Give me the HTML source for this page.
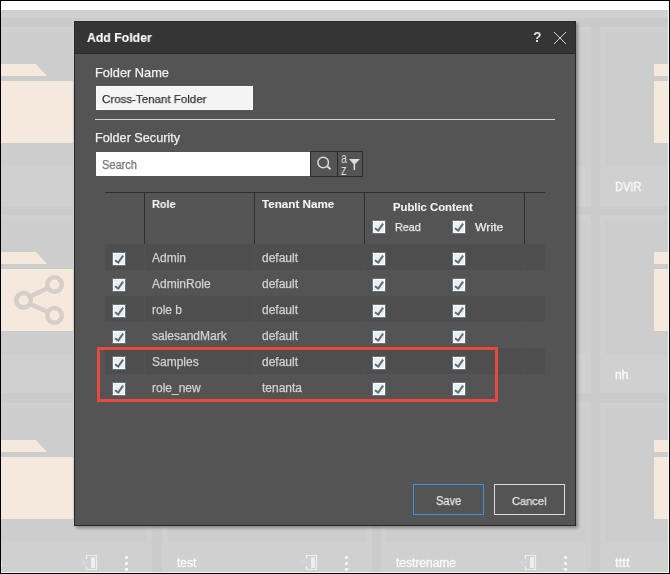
<!DOCTYPE html>
<html><head><meta charset="utf-8"><style>
html,body{margin:0;padding:0}
body{width:670px;height:574px;overflow:hidden;position:relative;background:#cbcbcb;font-family:"Liberation Sans",sans-serif}
.r{position:absolute;box-sizing:border-box}
.t{position:absolute;white-space:nowrap;will-change:transform;-webkit-text-stroke:0.25px currentColor}
</style></head><body>
<div class="r" style="left:0px;top:0px;width:670px;height:10px;background:#ffffff"></div>
<div class="r" style="left:0px;top:10px;width:670px;height:8px;background:#d0d0d0"></div>
<div class="r" style="left:0px;top:18px;width:670px;height:9px;background:#cacaca"></div>
<div class="r" style="left:-58px;top:27px;width:210px;height:179px;background:#d0d0d0"></div>
<div class="r" style="left:-53px;top:32px;width:200px;height:134px;background:#cdcdcd"></div>
<div class="r" style="left:162px;top:27px;width:210px;height:179px;background:#d0d0d0"></div>
<div class="r" style="left:167px;top:32px;width:200px;height:134px;background:#cdcdcd"></div>
<div class="r" style="left:381px;top:27px;width:210px;height:179px;background:#d0d0d0"></div>
<div class="r" style="left:386px;top:32px;width:200px;height:134px;background:#cdcdcd"></div>
<div class="r" style="left:600px;top:27px;width:210px;height:179px;background:#d0d0d0"></div>
<div class="r" style="left:605px;top:32px;width:200px;height:134px;background:#cdcdcd"></div>
<div class="r" style="left:-58px;top:215px;width:210px;height:178px;background:#d0d0d0"></div>
<div class="r" style="left:-53px;top:220px;width:200px;height:134px;background:#cdcdcd"></div>
<div class="r" style="left:162px;top:215px;width:210px;height:178px;background:#d0d0d0"></div>
<div class="r" style="left:167px;top:220px;width:200px;height:134px;background:#cdcdcd"></div>
<div class="r" style="left:381px;top:215px;width:210px;height:178px;background:#d0d0d0"></div>
<div class="r" style="left:386px;top:220px;width:200px;height:134px;background:#cdcdcd"></div>
<div class="r" style="left:600px;top:215px;width:210px;height:178px;background:#d0d0d0"></div>
<div class="r" style="left:605px;top:220px;width:200px;height:134px;background:#cdcdcd"></div>
<div class="r" style="left:-58px;top:403px;width:210px;height:200px;background:#d0d0d0"></div>
<div class="r" style="left:-53px;top:408px;width:200px;height:134px;background:#cdcdcd"></div>
<div class="r" style="left:162px;top:403px;width:210px;height:200px;background:#d0d0d0"></div>
<div class="r" style="left:167px;top:408px;width:200px;height:134px;background:#cdcdcd"></div>
<div class="r" style="left:381px;top:403px;width:210px;height:200px;background:#d0d0d0"></div>
<div class="r" style="left:386px;top:408px;width:200px;height:134px;background:#cdcdcd"></div>
<div class="r" style="left:600px;top:403px;width:210px;height:200px;background:#d0d0d0"></div>
<div class="r" style="left:605px;top:408px;width:200px;height:134px;background:#cdcdcd"></div>
<svg class="r" style="left:-4px;top:64px" width="60" height="12"><polygon points="0,0 40,0 51,12 0,12" fill="#f5e8dc"/></svg>
<div class="r" style="left:-4px;top:81px;width:102px;height:62px;background:#f5e8dc"></div>
<svg class="r" style="left:654px;top:64px" width="60" height="12"><polygon points="0,0 40,0 51,12 0,12" fill="#f5e8dc"/></svg>
<div class="r" style="left:654px;top:81px;width:102px;height:62px;background:#f5e8dc"></div>
<svg class="r" style="left:-4px;top:252px" width="60" height="12"><polygon points="0,0 40,0 51,12 0,12" fill="#f5e8dc"/></svg>
<div class="r" style="left:-4px;top:269px;width:102px;height:62px;background:#f5e8dc"></div>
<svg class="r" style="left:654px;top:252px" width="60" height="12"><polygon points="0,0 40,0 51,12 0,12" fill="#f5e8dc"/></svg>
<div class="r" style="left:654px;top:269px;width:102px;height:62px;background:#f5e8dc"></div>
<svg class="r" style="left:-4px;top:440px" width="60" height="12"><polygon points="0,0 40,0 51,12 0,12" fill="#f5e8dc"/></svg>
<div class="r" style="left:-4px;top:457px;width:102px;height:62px;background:#f5e8dc"></div>
<svg class="r" style="left:654px;top:440px" width="60" height="12"><polygon points="0,0 40,0 51,12 0,12" fill="#f5e8dc"/></svg>
<div class="r" style="left:654px;top:457px;width:102px;height:62px;background:#f5e8dc"></div>
<svg class="r" style="left:0px;top:270px" width="80" height="60"><g fill="none" stroke="#d6cec8" stroke-width="4.5">
<circle cx="23.6" cy="30.2" r="7.3"/><circle cx="54.5" cy="14.5" r="7.3"/><circle cx="54.5" cy="45.4" r="7.3"/>
<line x1="30" y1="26.5" x2="48" y2="18"/><line x1="30" y1="34" x2="48" y2="42"/></g></svg>
<div class="t" style="left:615.2px;top:180.24px;font-size:12px;line-height:14px;color:#fafafa;font-weight:normal;transform:scaleX(0.92);transform-origin:0 0;-webkit-text-stroke:0.3px currentColor;">DVIR</div>
<div class="t" style="left:615.4px;top:368.14px;font-size:12px;line-height:14px;color:#fafafa;font-weight:normal;-webkit-text-stroke:0.3px currentColor;">nh</div>
<div class="t" style="left:615.3px;top:555.64px;font-size:12px;line-height:14px;color:#fafafa;font-weight:normal;transform:scaleX(1.1);transform-origin:0 0;-webkit-text-stroke:0.3px currentColor;">tttt</div>
<div class="t" style="left:177px;top:555.64px;font-size:12px;line-height:14px;color:#fafafa;font-weight:normal;-webkit-text-stroke:0.3px currentColor;">test</div>
<div class="t" style="left:395.8px;top:555.64px;font-size:12px;line-height:14px;color:#fafafa;font-weight:normal;-webkit-text-stroke:0.3px currentColor;">testrename</div>
<svg class="r" style="left:81px;top:555px" width="18" height="16" viewBox="0 0 18 16"><path d="M5.5 4 V0.5 H15.5 V14.5 H5.5 V11" fill="none" stroke="#eeeeee" stroke-width="1.2"/><rect x="10" y="2.2" width="4" height="10.8" fill="#eeeeee"/><path d="M1 7.5 H7.5 M3.8 4.5 L0.8 7.5 L3.8 10.5" fill="none" stroke="#c8dde8" stroke-width="1.2"/></svg>
<div class="r" style="left:125px;top:556px;width:3px;height:3px;background:#f2f2f2"></div>
<div class="r" style="left:125px;top:562px;width:3px;height:3px;background:#f2f2f2"></div>
<div class="r" style="left:125px;top:568px;width:3px;height:3px;background:#f2f2f2"></div>
<svg class="r" style="left:301px;top:555px" width="18" height="16" viewBox="0 0 18 16"><path d="M5.5 4 V0.5 H15.5 V14.5 H5.5 V11" fill="none" stroke="#eeeeee" stroke-width="1.2"/><rect x="10" y="2.2" width="4" height="10.8" fill="#eeeeee"/><path d="M1 7.5 H7.5 M3.8 4.5 L0.8 7.5 L3.8 10.5" fill="none" stroke="#c8dde8" stroke-width="1.2"/></svg>
<div class="r" style="left:345px;top:556px;width:3px;height:3px;background:#f2f2f2"></div>
<div class="r" style="left:345px;top:562px;width:3px;height:3px;background:#f2f2f2"></div>
<div class="r" style="left:345px;top:568px;width:3px;height:3px;background:#f2f2f2"></div>
<svg class="r" style="left:520px;top:555px" width="18" height="16" viewBox="0 0 18 16"><path d="M5.5 4 V0.5 H15.5 V14.5 H5.5 V11" fill="none" stroke="#eeeeee" stroke-width="1.2"/><rect x="10" y="2.2" width="4" height="10.8" fill="#eeeeee"/><path d="M1 7.5 H7.5 M3.8 4.5 L0.8 7.5 L3.8 10.5" fill="none" stroke="#c8dde8" stroke-width="1.2"/></svg>
<div class="r" style="left:564px;top:556px;width:3px;height:3px;background:#f2f2f2"></div>
<div class="r" style="left:564px;top:562px;width:3px;height:3px;background:#f2f2f2"></div>
<div class="r" style="left:564px;top:568px;width:3px;height:3px;background:#f2f2f2"></div>
<svg class="r" style="left:739px;top:555px" width="18" height="16" viewBox="0 0 18 16"><path d="M5.5 4 V0.5 H15.5 V14.5 H5.5 V11" fill="none" stroke="#eeeeee" stroke-width="1.2"/><rect x="10" y="2.2" width="4" height="10.8" fill="#eeeeee"/><path d="M1 7.5 H7.5 M3.8 4.5 L0.8 7.5 L3.8 10.5" fill="none" stroke="#c8dde8" stroke-width="1.2"/></svg>
<div class="r" style="left:783px;top:556px;width:3px;height:3px;background:#f2f2f2"></div>
<div class="r" style="left:783px;top:562px;width:3px;height:3px;background:#f2f2f2"></div>
<div class="r" style="left:783px;top:568px;width:3px;height:3px;background:#f2f2f2"></div>
<div class="r" style="left:1px;top:561px;width:1px;height:2px;background:#f0ecd8"></div>
<div class="r" style="left:1px;top:564px;width:1px;height:3px;background:#f4f0e4"></div>
<div class="r" style="left:668px;top:0px;width:1px;height:574px;background:#f2f2f2"></div>
<div class="r" style="left:0px;top:572px;width:670px;height:1px;background:#f2f2f2"></div>
<div class="r" style="left:0px;top:0px;width:670px;height:574px;border:1px solid #000"></div>
<div class="r" style="left:73px;top:20px;width:1px;height:506px;background:#d4d4d4"></div>
<div class="r" style="left:73px;top:20px;width:504px;height:1px;background:#d4d4d4"></div>
<div class="r" style="left:74px;top:21px;width:502px;height:505px;background:#545454;border:1px solid #282828;box-shadow:2px 2px 3px 0px rgba(0,0,0,0.35)"></div>
<div class="r" style="left:75px;top:22px;width:500px;height:31px;background:#353535"></div>
<div class="r" style="left:74px;top:53px;width:502px;height:1px;background:#2b2b2b"></div>
<div class="t" style="left:87.2px;top:29.63px;font-size:13.2px;line-height:16px;color:#ffffff;font-weight:bold;transform:scaleX(0.93);transform-origin:0 0;-webkit-text-stroke:0.1px currentColor;">Add Folder</div>
<div class="t" style="left:532.6px;top:28.65px;font-size:14px;line-height:17px;color:#dedede;font-weight:bold;-webkit-text-stroke:0;">?</div>
<svg class="r" style="left:553px;top:31px" width="14" height="14"><path d="M1 1 L13 13 M13 1 L1 13" stroke="#d4d4d4" stroke-width="1"/></svg>
<div class="t" style="left:95.4px;top:65.06px;font-size:12.8px;line-height:15px;color:#f0f0f0;font-weight:normal;">Folder Name</div>
<div class="r" style="left:96px;top:86px;width:157px;height:24px;background:#f4f4f4;border:1px solid #fafafa"></div>
<div class="t" style="left:102.4px;top:91.91px;font-size:11.8px;line-height:14px;color:#333333;font-weight:normal;transform:scaleX(0.977);transform-origin:0 0;">Cross-Tenant Folder</div>
<div class="r" style="left:95px;top:119px;width:460px;height:1px;background:#d6d6d6"></div>
<div class="t" style="left:94.9px;top:131.27px;font-size:12.5px;line-height:15px;color:#f0f0f0;font-weight:normal;transform:scaleX(1.012);transform-origin:0 0;">Folder Security</div>
<div class="r" style="left:96px;top:152px;width:214px;height:24px;background:#ffffff"></div>
<div class="t" style="left:102px;top:157.84px;font-size:12px;line-height:14px;color:#747474;font-weight:normal;transform:scaleX(0.92);transform-origin:0 0;">Search</div>
<div class="r" style="left:310px;top:151px;width:28px;height:26px;border:1px solid #2b2b2b"></div>
<div class="r" style="left:337px;top:151px;width:26px;height:26px;border:1px solid #2b2b2b"></div>
<svg class="r" style="left:310px;top:151px" width="28" height="26"><g fill="none" stroke="#d8d8d8" stroke-width="1.5"><circle cx="13.2" cy="11.5" r="5.3"/><line x1="17" y1="15" x2="20.5" y2="18.3" stroke-width="2"/></g></svg>
<div class="t" style="left:341.2px;top:148.80px;font-size:15px;line-height:18px;color:#d8d8d8;font-weight:normal;transform:scaleX(0.72);transform-origin:0 0;-webkit-text-stroke:0;">a</div>
<div class="t" style="left:341.2px;top:161.85px;font-size:14px;line-height:17px;color:#d8d8d8;font-weight:normal;transform:scaleX(0.8);transform-origin:0 0;-webkit-text-stroke:0;">z</div>
<svg class="r" style="left:337px;top:151px" width="26" height="26"><polygon points="12,8 23,8 17.3,14" fill="#dcdcdc"/><rect x="16.6" y="13" width="1.5" height="6" fill="#dcdcdc"/></svg>
<div class="r" style="left:105px;top:192px;width:440px;height:1px;background:#2e2e2e"></div>
<div class="r" style="left:144px;top:192px;width:1px;height:52px;background:#2e2e2e"></div>
<div class="r" style="left:254px;top:192px;width:1px;height:52px;background:#2e2e2e"></div>
<div class="r" style="left:364px;top:192px;width:1px;height:52px;background:#2e2e2e"></div>
<div class="r" style="left:524px;top:192px;width:1px;height:52px;background:#2e2e2e"></div>
<div class="t" style="left:152.3px;top:196.82px;font-size:11.5px;line-height:14px;color:#f4f4f4;font-weight:bold;transform:scaleX(0.95);transform-origin:0 0;-webkit-text-stroke:0.1px currentColor;">Role</div>
<div class="t" style="left:262.3px;top:197.02px;font-size:11.5px;line-height:14px;color:#f4f4f4;font-weight:bold;transform:scaleX(1.012);transform-origin:0 0;-webkit-text-stroke:0.1px currentColor;">Tenant Name</div>
<div class="t" style="left:393.3px;top:199.68px;font-size:11.3px;line-height:14px;color:#f4f4f4;font-weight:bold;-webkit-text-stroke:0.1px currentColor;">Public Content</div>
<svg class="r" style="left:372px;top:220px" width="14" height="14" viewBox="0 0 14 14"><rect x="0.5" y="0.5" width="13" height="13" fill="#fff" stroke="#627585"/><rect x="2" y="2" width="10" height="10" fill="#eeeeee"/><path d="M3 8.3 L6.2 10.6 L11.1 3.7" fill="none" stroke="#5b6e7e" stroke-width="2"/></svg>
<svg class="r" style="left:452px;top:220px" width="14" height="14" viewBox="0 0 14 14"><rect x="0.5" y="0.5" width="13" height="13" fill="#fff" stroke="#627585"/><rect x="2" y="2" width="10" height="10" fill="#eeeeee"/><path d="M3 8.3 L6.2 10.6 L11.1 3.7" fill="none" stroke="#5b6e7e" stroke-width="2"/></svg>
<div class="t" style="left:394.6px;top:220.28px;font-size:11.3px;line-height:14px;color:#eeeeee;font-weight:normal;transform:scaleX(0.95);transform-origin:0 0;">Read</div>
<div class="t" style="left:474.9px;top:220.31px;font-size:11.8px;line-height:14px;color:#eeeeee;font-weight:normal;transform:scaleX(1.04);transform-origin:0 0;">Write</div>
<div class="r" style="left:105px;top:244px;width:440px;height:26px;background:#4e4e4e"></div>
<div class="r" style="left:144px;top:244px;width:1px;height:26px;background:#525252"></div>
<div class="r" style="left:254px;top:244px;width:1px;height:26px;background:#525252"></div>
<div class="r" style="left:364px;top:244px;width:1px;height:26px;background:#525252"></div>
<div class="r" style="left:524px;top:244px;width:1px;height:26px;background:#525252"></div>
<svg class="r" style="left:112px;top:252px" width="14" height="14" viewBox="0 0 14 14"><rect x="0.5" y="0.5" width="13" height="13" fill="#fff" stroke="#627585"/><rect x="2" y="2" width="10" height="10" fill="#eeeeee"/><path d="M3 8.3 L6.2 10.6 L11.1 3.7" fill="none" stroke="#5b6e7e" stroke-width="2"/></svg>
<svg class="r" style="left:372px;top:252px" width="14" height="14" viewBox="0 0 14 14"><rect x="0.5" y="0.5" width="13" height="13" fill="#fff" stroke="#627585"/><rect x="2" y="2" width="10" height="10" fill="#eeeeee"/><path d="M3 8.3 L6.2 10.6 L11.1 3.7" fill="none" stroke="#5b6e7e" stroke-width="2"/></svg>
<svg class="r" style="left:452px;top:252px" width="14" height="14" viewBox="0 0 14 14"><rect x="0.5" y="0.5" width="13" height="13" fill="#fff" stroke="#627585"/><rect x="2" y="2" width="10" height="10" fill="#eeeeee"/><path d="M3 8.3 L6.2 10.6 L11.1 3.7" fill="none" stroke="#5b6e7e" stroke-width="2"/></svg>
<div class="t" style="left:152.2px;top:250.64px;font-size:12px;line-height:14px;color:#d2d2d2;font-weight:normal;">Admin</div>
<div class="t" style="left:262.1px;top:250.64px;font-size:12px;line-height:14px;color:#d2d2d2;font-weight:normal;">default</div>
<svg class="r" style="left:112px;top:278px" width="14" height="14" viewBox="0 0 14 14"><rect x="0.5" y="0.5" width="13" height="13" fill="#fff" stroke="#627585"/><rect x="2" y="2" width="10" height="10" fill="#eeeeee"/><path d="M3 8.3 L6.2 10.6 L11.1 3.7" fill="none" stroke="#5b6e7e" stroke-width="2"/></svg>
<svg class="r" style="left:372px;top:278px" width="14" height="14" viewBox="0 0 14 14"><rect x="0.5" y="0.5" width="13" height="13" fill="#fff" stroke="#627585"/><rect x="2" y="2" width="10" height="10" fill="#eeeeee"/><path d="M3 8.3 L6.2 10.6 L11.1 3.7" fill="none" stroke="#5b6e7e" stroke-width="2"/></svg>
<svg class="r" style="left:452px;top:278px" width="14" height="14" viewBox="0 0 14 14"><rect x="0.5" y="0.5" width="13" height="13" fill="#fff" stroke="#627585"/><rect x="2" y="2" width="10" height="10" fill="#eeeeee"/><path d="M3 8.3 L6.2 10.6 L11.1 3.7" fill="none" stroke="#5b6e7e" stroke-width="2"/></svg>
<div class="t" style="left:152.2px;top:276.64px;font-size:12px;line-height:14px;color:#d2d2d2;font-weight:normal;">AdminRole</div>
<div class="t" style="left:262.1px;top:276.64px;font-size:12px;line-height:14px;color:#d2d2d2;font-weight:normal;">default</div>
<div class="r" style="left:105px;top:296px;width:440px;height:26px;background:#4e4e4e"></div>
<div class="r" style="left:144px;top:296px;width:1px;height:26px;background:#525252"></div>
<div class="r" style="left:254px;top:296px;width:1px;height:26px;background:#525252"></div>
<div class="r" style="left:364px;top:296px;width:1px;height:26px;background:#525252"></div>
<div class="r" style="left:524px;top:296px;width:1px;height:26px;background:#525252"></div>
<svg class="r" style="left:112px;top:304px" width="14" height="14" viewBox="0 0 14 14"><rect x="0.5" y="0.5" width="13" height="13" fill="#fff" stroke="#627585"/><rect x="2" y="2" width="10" height="10" fill="#eeeeee"/><path d="M3 8.3 L6.2 10.6 L11.1 3.7" fill="none" stroke="#5b6e7e" stroke-width="2"/></svg>
<svg class="r" style="left:372px;top:304px" width="14" height="14" viewBox="0 0 14 14"><rect x="0.5" y="0.5" width="13" height="13" fill="#fff" stroke="#627585"/><rect x="2" y="2" width="10" height="10" fill="#eeeeee"/><path d="M3 8.3 L6.2 10.6 L11.1 3.7" fill="none" stroke="#5b6e7e" stroke-width="2"/></svg>
<svg class="r" style="left:452px;top:304px" width="14" height="14" viewBox="0 0 14 14"><rect x="0.5" y="0.5" width="13" height="13" fill="#fff" stroke="#627585"/><rect x="2" y="2" width="10" height="10" fill="#eeeeee"/><path d="M3 8.3 L6.2 10.6 L11.1 3.7" fill="none" stroke="#5b6e7e" stroke-width="2"/></svg>
<div class="t" style="left:152.2px;top:302.64px;font-size:12px;line-height:14px;color:#d2d2d2;font-weight:normal;">role b</div>
<div class="t" style="left:262.1px;top:302.64px;font-size:12px;line-height:14px;color:#d2d2d2;font-weight:normal;">default</div>
<svg class="r" style="left:112px;top:330px" width="14" height="14" viewBox="0 0 14 14"><rect x="0.5" y="0.5" width="13" height="13" fill="#fff" stroke="#627585"/><rect x="2" y="2" width="10" height="10" fill="#eeeeee"/><path d="M3 8.3 L6.2 10.6 L11.1 3.7" fill="none" stroke="#5b6e7e" stroke-width="2"/></svg>
<svg class="r" style="left:372px;top:330px" width="14" height="14" viewBox="0 0 14 14"><rect x="0.5" y="0.5" width="13" height="13" fill="#fff" stroke="#627585"/><rect x="2" y="2" width="10" height="10" fill="#eeeeee"/><path d="M3 8.3 L6.2 10.6 L11.1 3.7" fill="none" stroke="#5b6e7e" stroke-width="2"/></svg>
<svg class="r" style="left:452px;top:330px" width="14" height="14" viewBox="0 0 14 14"><rect x="0.5" y="0.5" width="13" height="13" fill="#fff" stroke="#627585"/><rect x="2" y="2" width="10" height="10" fill="#eeeeee"/><path d="M3 8.3 L6.2 10.6 L11.1 3.7" fill="none" stroke="#5b6e7e" stroke-width="2"/></svg>
<div class="t" style="left:152.2px;top:328.64px;font-size:12px;line-height:14px;color:#d2d2d2;font-weight:normal;">salesandMark</div>
<div class="t" style="left:262.1px;top:328.64px;font-size:12px;line-height:14px;color:#d2d2d2;font-weight:normal;">default</div>
<div class="r" style="left:105px;top:348px;width:440px;height:26px;background:#4e4e4e"></div>
<div class="r" style="left:144px;top:348px;width:1px;height:26px;background:#525252"></div>
<div class="r" style="left:254px;top:348px;width:1px;height:26px;background:#525252"></div>
<div class="r" style="left:364px;top:348px;width:1px;height:26px;background:#525252"></div>
<div class="r" style="left:524px;top:348px;width:1px;height:26px;background:#525252"></div>
<svg class="r" style="left:112px;top:356px" width="14" height="14" viewBox="0 0 14 14"><rect x="0.5" y="0.5" width="13" height="13" fill="#fff" stroke="#627585"/><rect x="2" y="2" width="10" height="10" fill="#eeeeee"/><path d="M3 8.3 L6.2 10.6 L11.1 3.7" fill="none" stroke="#5b6e7e" stroke-width="2"/></svg>
<svg class="r" style="left:372px;top:356px" width="14" height="14" viewBox="0 0 14 14"><rect x="0.5" y="0.5" width="13" height="13" fill="#fff" stroke="#627585"/><rect x="2" y="2" width="10" height="10" fill="#eeeeee"/><path d="M3 8.3 L6.2 10.6 L11.1 3.7" fill="none" stroke="#5b6e7e" stroke-width="2"/></svg>
<svg class="r" style="left:452px;top:356px" width="14" height="14" viewBox="0 0 14 14"><rect x="0.5" y="0.5" width="13" height="13" fill="#fff" stroke="#627585"/><rect x="2" y="2" width="10" height="10" fill="#eeeeee"/><path d="M3 8.3 L6.2 10.6 L11.1 3.7" fill="none" stroke="#5b6e7e" stroke-width="2"/></svg>
<div class="t" style="left:152.2px;top:354.64px;font-size:12px;line-height:14px;color:#d2d2d2;font-weight:normal;">Samples</div>
<div class="t" style="left:262.1px;top:354.64px;font-size:12px;line-height:14px;color:#d2d2d2;font-weight:normal;">default</div>
<svg class="r" style="left:112px;top:382px" width="14" height="14" viewBox="0 0 14 14"><rect x="0.5" y="0.5" width="13" height="13" fill="#fff" stroke="#627585"/><rect x="2" y="2" width="10" height="10" fill="#eeeeee"/><path d="M3 8.3 L6.2 10.6 L11.1 3.7" fill="none" stroke="#5b6e7e" stroke-width="2"/></svg>
<svg class="r" style="left:372px;top:382px" width="14" height="14" viewBox="0 0 14 14"><rect x="0.5" y="0.5" width="13" height="13" fill="#fff" stroke="#627585"/><rect x="2" y="2" width="10" height="10" fill="#eeeeee"/><path d="M3 8.3 L6.2 10.6 L11.1 3.7" fill="none" stroke="#5b6e7e" stroke-width="2"/></svg>
<svg class="r" style="left:452px;top:382px" width="14" height="14" viewBox="0 0 14 14"><rect x="0.5" y="0.5" width="13" height="13" fill="#fff" stroke="#627585"/><rect x="2" y="2" width="10" height="10" fill="#eeeeee"/><path d="M3 8.3 L6.2 10.6 L11.1 3.7" fill="none" stroke="#5b6e7e" stroke-width="2"/></svg>
<div class="t" style="left:152.2px;top:380.64px;font-size:12px;line-height:14px;color:#d2d2d2;font-weight:normal;">role_new</div>
<div class="t" style="left:262.1px;top:380.64px;font-size:12px;line-height:14px;color:#d2d2d2;font-weight:normal;">tenanta</div>
<div class="r" style="left:97px;top:347px;width:401px;height:55px;border:3px solid #e8493f"></div>
<div class="r" style="left:413px;top:484px;width:71px;height:31px;border:1px solid #3f8fe6"></div>
<div class="t" style="left:436.4px;top:493.84px;font-size:12px;line-height:14px;color:#e6e6e6;font-weight:normal;transform:scaleX(0.92);transform-origin:0 0;">Save</div>
<div class="r" style="left:494px;top:484px;width:71px;height:31px;border:1px solid #dcdcdc"></div>
<div class="t" style="left:511.8px;top:494.02px;font-size:11.5px;line-height:14px;color:#e6e6e6;font-weight:normal;transform:scaleX(0.965);transform-origin:0 0;">Cancel</div>
</body></html>
